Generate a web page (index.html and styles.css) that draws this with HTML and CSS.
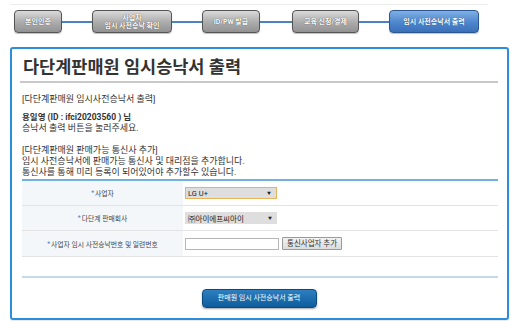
FILE: index.html
```html
<!DOCTYPE html>
<html lang="ko">
<head>
<meta charset="utf-8">
<title>다단계판매원 임시승낙서 출력</title>
<link rel="stylesheet" href="styles.css">
</head>
<body>
<div class="page">
  <div class="topline"></div>
  <div class="steps">
    <div class="step s1">본인인증</div>
    <div class="conn"></div>
    <div class="step s2">사업자<br>임시 사전승낙 확인</div>
    <div class="conn"></div>
    <div class="step s3">ID/PW 발급</div>
    <div class="conn"></div>
    <div class="step s4">교육 신청/결제</div>
    <div class="conn"></div>
    <div class="step s5 active">임시 사전승낙서 출력</div>
  </div>

  <div class="panel">
    <h1 class="title">다단계판매원 임시승낙서 출력</h1>
    <div class="intro">
      <p>[다단계판매원 임시사전승낙서 출력]</p>
      <p class="p2"><b>용일영 (ID : ifci20203560 ) 님</b><br>승낙서 출력 버튼을 눌러주세요.</p>
      <p class="p3">[다단계판매원 판매가능 통신사 추가]<br>임시 사전승낙서에 판매가능 통신사 및 대리점을 추가합니다.<br>통신사를 통해 미리 등록이 되어있어야 추가할수 있습니다.</p>
    </div>

    <div class="table">
      <div class="row">
        <div class="label"><span class="req">*</span>사업자</div>
        <div class="value"><div class="sel focus"><span>LG U+</span><span class="arr">▼</span></div></div>
      </div>
      <div class="row">
        <div class="label"><span class="req">*</span>다단계 판매회사</div>
        <div class="value"><div class="sel"><span>㈜아이에프씨아이</span><span class="arr">▼</span></div></div>
      </div>
      <div class="row">
        <div class="label"><span class="req">*</span>사업자 임시 사전승낙번호 및 일련번호</div>
        <div class="value"><div class="inp"></div><div class="btn-add">통신사업자 추가</div></div>
      </div>
    </div>

    <div class="sep"></div>
    <div class="actions">
      <div class="btn-print">판매원 임시 사전승낙서 출력</div>
    </div>
  </div>
</div>
</body>
</html>
```

FILE: styles.css
```css
html, body {
  margin: 0;
  padding: 0;
  background: #fff;
}
body {
  font-family: "Roboto", "Noto Sans CJK KR", sans-serif;
  color: #333;
  width: 520px;
  height: 330px;
  overflow: hidden;
}
.page {
  padding-top: 4px;
}
.topline {
  height: 1px;
  background: #ececec;
  margin: 0 32px 0 10px;
}
.steps {
  display: flex;
  align-items: center;
  padding-left: 14px;
  margin-top: 4px;
  height: 25px;
}
.step {
  height: 23px;
  border: 1px solid #555;
  border-radius: 4px;
  background: linear-gradient(#dadada, #ababab 55%, #929292);
  color: #fff;
  font-size: 7px;
  font-weight: bold;
  line-height: 8px;
  text-align: center;
  display: flex;
  align-items: center;
  justify-content: center;
  text-shadow: 0 0 1px #333;
  box-shadow: 0 1px 1px rgba(0,0,0,0.25);
  box-sizing: border-box;
}
.s1 { width: 48px; }
.s2 { width: 80px; }
.s3 { width: 58px; }
.s4 { width: 67px; }
.s5 { width: 90px; }
.step.active {
  background: linear-gradient(#7fb0e6, #4d86cc 55%, #3a70b8);
  border-color: #2c5790;
  text-shadow: 0 0 1px #1d3f70;
}
.conn {
  width: 30px;
  height: 2px;
  background: #4a82c4;
}
.conn:nth-child(6) { width: 32px; }

.panel {
  margin: 13px 11px 0 10px;
  border: 2px solid #2b8ddc;
  border-radius: 3px;
  padding: 0 9px 10px 8px;
  box-shadow: 0 1px 1px #e6e6e6;
}
.title {
  margin: 0;
  font-size: 17.5px;
  font-weight: bold;
  color: #333;
  padding: 8px 0 3px 3px;
  line-height: 21px;
  border-bottom: 2px solid #c9c9c9;
}
.intro {
  padding: 11px 0 0 2px;
  font-size: 9px;
  line-height: 11px;
  color: #333;
}
.intro p {
  margin: 0;
}
.intro .p2 { margin-top: 7px; }
.intro .p3 { margin-top: 11px; }
.intro b { font-weight: bold; color: #333; font-size: 8.5px; }

.table {
  margin: 1px 0 0 2px;
  border-top: 2px solid #72b0e0;
}
.row {
  display: flex;
  height: 24px;
  border-bottom: 1px solid #e3e3e3;
}
.row:last-child { height: 25px; }
.label {
  width: 161px;
  background: #f4f7fa;
  font-size: 6.8px;
  color: #444;
  display: flex;
  align-items: center;
  justify-content: center;
}
.req {
  color: #3d86cf;
  margin-right: 1px;
}
.value {
  flex: 1;
  display: flex;
  align-items: center;
  padding-left: 2px;
}
.sel {
  width: 92px;
  height: 12px;
  box-sizing: border-box;
  background: #dedede;
  font-size: 7.5px;
  color: #222;
  display: flex;
  align-items: center;
  justify-content: space-between;
  padding: 0 5px 0 3px;
}
.sel.focus {
  border: 1px solid #e9b35a;
  padding-left: 2px;
}
.arr {
  font-size: 4px;
  color: #222;
}
.inp {
  width: 94px;
  height: 12px;
  box-sizing: border-box;
  border: 1px solid #b4b4b4;
  background: #fff;
}
.btn-add {
  margin-left: 3px;
  height: 13px;
  box-sizing: border-box;
  padding: 0 4px;
  border: 1px solid #9a9a9a;
  border-radius: 1px;
  background: linear-gradient(#f2f2f2, #dcdcdc);
  font-size: 7.5px;
  line-height: 11px;
  color: #333;
}
.sep {
  margin: 19px 0 0 2px;
  height: 2px;
  background: #c3dbec;
}
.actions {
  display: flex;
  justify-content: center;
  margin-top: 11px;
}
.btn-print {
  width: 115px;
  height: 19px;
  box-sizing: border-box;
  border: 1px solid #0b4a80;
  border-radius: 4px;
  background: linear-gradient(#2d7fc0, #0f5c9c);
  color: #fff;
  font-size: 7px;
  line-height: 17px;
  text-align: center;
  box-shadow: 0 1px 2px rgba(0,0,0,0.35);
}
```
